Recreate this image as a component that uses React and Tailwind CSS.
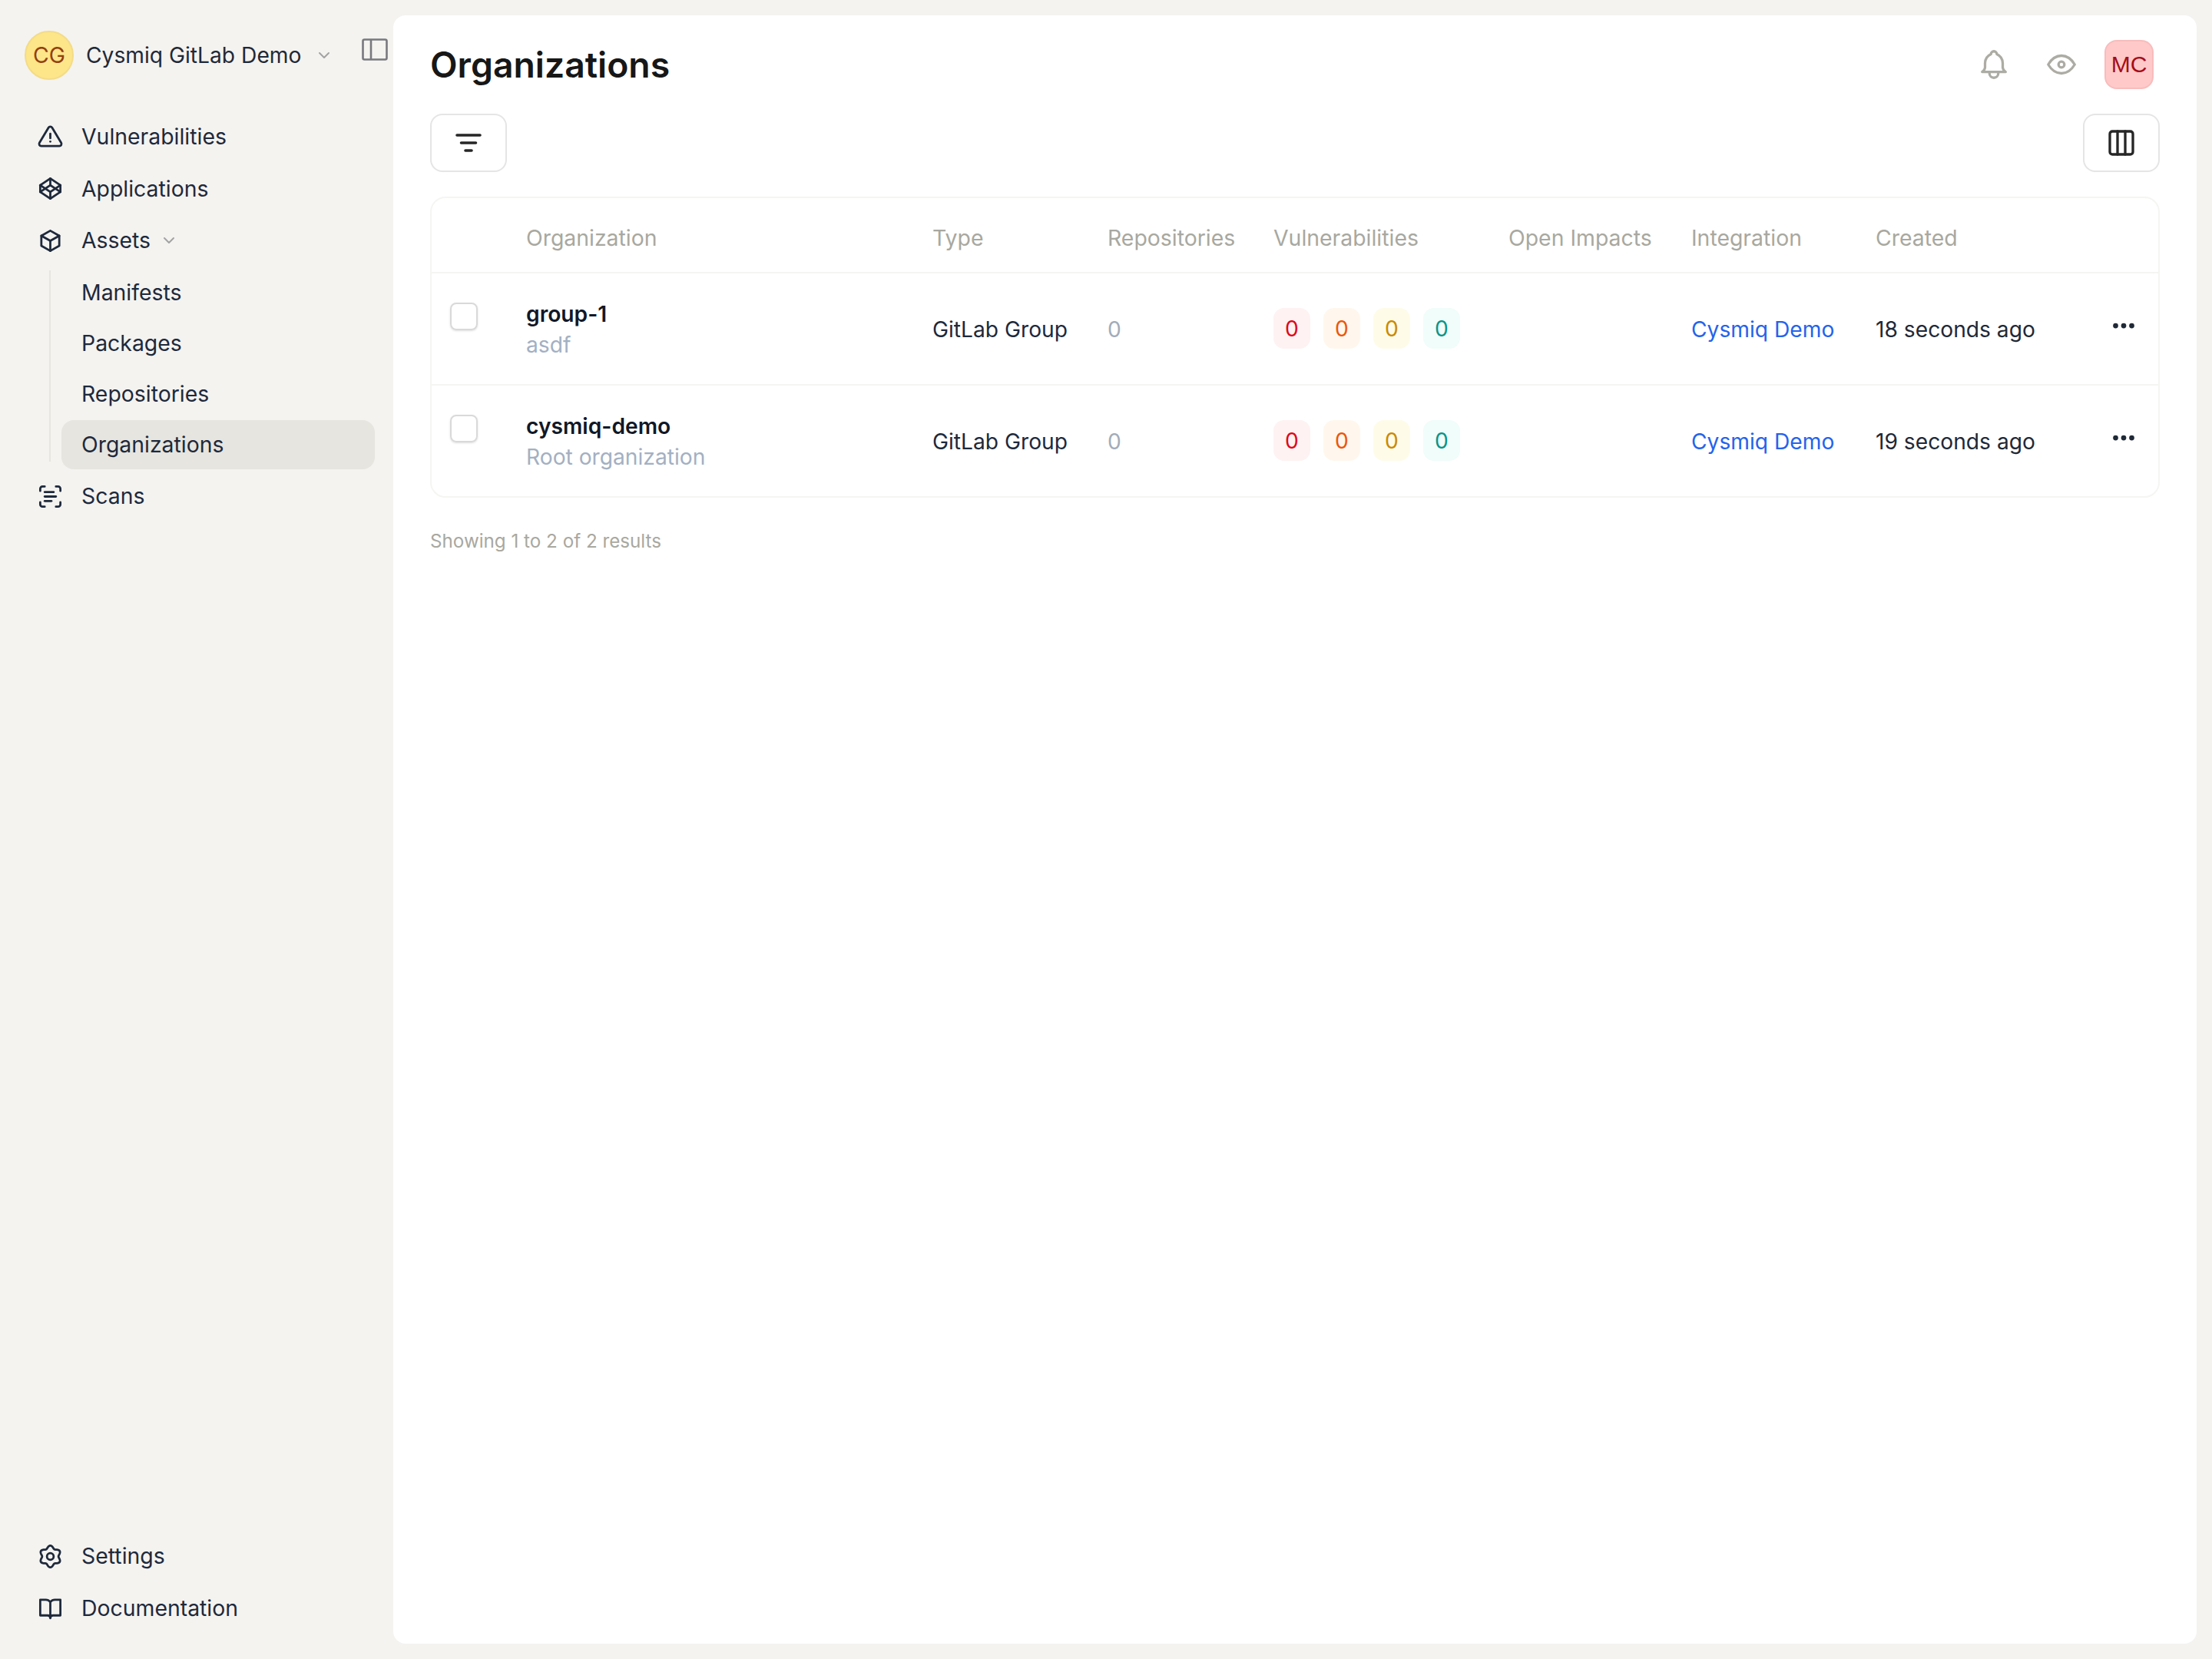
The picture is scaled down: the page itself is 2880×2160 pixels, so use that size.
import {
  TbAlertTriangle, TbBrandCodepen, TbBox, TbChevronDown, TbBell, TbEye, TbDots,
} from 'react-icons/tb';
import { Columns3, ScanText } from 'lucide-react';

// six-lobed cog outline
const cogPath = Array.from({ length: 120 }, (_, i) => {
  const t = (i / 120) * Math.PI * 2;
  const r = 8.5 + 1.2 * Math.cos(6 * t);
  const x = 12 + r * Math.sin(t);
  const y = 12 - r * Math.cos(t);
  return `${i === 0 ? 'M' : 'L'}${x.toFixed(2)} ${y.toFixed(2)}`;
}).join(' ') + ' Z';

function CogIcon({ size }) {
  return (
    <svg width={size} height={size} viewBox="0 0 24 24" fill="none" stroke="currentColor" strokeWidth="1.9" strokeLinejoin="round" className="shrink-0">
      <path d={cogPath} />
      <circle cx="12" cy="12" r="3" />
    </svg>
  );
}

function BookIcon({ size }) {
  return (
    <svg width={size} height={size} viewBox="0 0 24 24" fill="none" stroke="currentColor" strokeWidth="1.9" strokeLinecap="round" strokeLinejoin="round" className="shrink-0">
      <path d="M12 6 C11 4.8 10 4 8 4 H3 V18 H9.5 C11 18 12 19 12 20.5 C12 19 13 18 14.5 18 H21 V4 H16 C14 4 13 4.8 12 6 Z M12 6 V20.5" />
    </svg>
  );
}

function PanelIcon() {
  return (
    <svg width="34" height="30" viewBox="0 0 34 30" fill="none" stroke="currentColor" strokeWidth="2.6" strokeLinejoin="round" className="shrink-0 text-[#78787e]">
      <rect x="1.5" y="1.5" width="31" height="26" rx="2" />
      <path d="M12 1.5 V27.5" />
    </svg>
  );
}

function FilterIcon() {
  return (
    <svg width="36" height="30" viewBox="0 0 36 30" fill="none" stroke="currentColor" strokeWidth="3.6" strokeLinecap="round" className="text-[#262626]">
      <path d="M3 5 H33 M8.5 15 H27.5 M14 25 H22" />
    </svg>
  );
}

const navTop = [
  { label: 'Vulnerabilities', icon: TbAlertTriangle },
  { label: 'Applications', icon: TbBrandCodepen },
];

const subItems = ['Manifests', 'Packages', 'Repositories', 'Organizations'];

const rows = [
  { name: 'group-1', sub: 'asdf', created: '18 seconds ago' },
  { name: 'cysmiq-demo', sub: 'Root organization', created: '19 seconds ago' },
];

const badges = [
  'bg-[#fef2f2] text-[#dc0a1a]',
  'bg-[#fff7ed] text-[#ea580c]',
  'bg-[#fefce8] text-[#ca8a04]',
  'bg-[#f0fdfa] text-[#0d9488]',
];

function NavItem({ label, icon: Icon, children }) {
  return (
    <div className="flex items-center h-[64px] pl-[48px] text-[#1e293b]">
      <Icon size={35} strokeWidth={1.9} className="shrink-0" />
      <span className="ml-[23px] pt-[1px]">{label}</span>
      {children}
    </div>
  );
}

export default function App() {
  return (
    <div className="flex h-screen bg-[#f4f3f0] font-['Inter',sans-serif] text-[28.4px] leading-none">
      {/* sidebar */}
      <aside className="flex flex-col justify-between w-[512px] shrink-0 pb-[34px]">
        <div>
          <div className="flex items-center h-[64px] mt-[40px] pl-[32px]">
            <div className="flex items-center justify-center w-[64px] h-[64px] shrink-0 rounded-full bg-[#fde58a] border-2 border-[#f3dc86] text-[#92400e]">CG</div>
            <span className="ml-[16px] whitespace-nowrap text-[#1f2937] text-[28.2px]">Cysmiq GitLab Demo</span>
            <TbChevronDown size={24} className="ml-[18px] shrink-0 text-[#a3a3a3]" />
            <div className="ml-[37px] -mt-[14px]"><PanelIcon /></div>
          </div>

          <nav className="flex flex-col gap-[3.5px] mt-[42px]">
            {navTop.map((item) => (
              <NavItem key={item.label} {...item} />
            ))}
            <NavItem label="Assets" icon={TbBox}>
              <TbChevronDown size={24} className="ml-[12px] text-[#a3a3a3]" />
            </NavItem>
            <div className="relative flex flex-col gap-[2px] pl-[80px] pr-[24px]">
              <div className="absolute left-[64px] top-[3px] bottom-[10px] w-[2px] bg-[#e6e5df]" />
              {subItems.map((label) => (
                <div
                  key={label}
                  className={`flex items-center h-[64px] pl-[26px] pt-[1px] rounded-[16px] text-[#1e293b] ${label === 'Organizations' ? 'bg-[#e6e5df]' : ''}`}
                >
                  {label}
                </div>
              ))}
            </div>
            <NavItem label="Scans" icon={ScanText} />
          </nav>
        </div>

        <div className="flex flex-col gap-[4px]">
          <NavItem label="Settings" icon={CogIcon} />
          <NavItem label="Documentation" icon={BookIcon} />
        </div>
      </aside>

      {/* main panel */}
      <main className="flex-1 my-[20px] mr-[20px] bg-white rounded-[16px] px-[48px]">
        <header className="flex items-center justify-between h-[128px]">
          <h1 className="text-[46.3px] font-semibold text-[#171717]">Organizations</h1>
          <div className="flex items-center pr-[8px]">
            <TbBell size={46} strokeWidth={1.7} className="text-[#acaca4]" />
            <TbEye size={46} strokeWidth={1.7} className="ml-[42px] text-[#acaca4]" />
            <div className="flex items-center justify-center ml-[33px] w-[64px] h-[64px] rounded-[16px] bg-[#ffc9c9] border-2 border-[#f8bcbc] text-[#a50d1a] font-['Liberation_Sans',sans-serif] text-[30px]">MC</div>
          </div>
        </header>

        <div className="flex items-center justify-between">
          <button className="flex items-center justify-center w-[100px] h-[76px] rounded-[16px] border-2 border-[#e5e5e5]">
            <FilterIcon />
          </button>
          <button className="flex items-center justify-center w-[100px] h-[76px] rounded-[16px] border-2 border-[#e5e5e5] text-[#262626]">
            <Columns3 size={40} strokeWidth={2} />
          </button>
        </div>

        <div className="mt-[32px] border-2 border-[#f5f5f2] rounded-[20px]">
          <table className="w-full table-fixed border-collapse">
            <colgroup>
              <col className="w-[123px]" />
              <col className="w-[529px]" />
              <col className="w-[228px]" />
              <col className="w-[216px]" />
              <col className="w-[306px]" />
              <col className="w-[238px]" />
              <col className="w-[240px]" />
              <col className="w-[305px]" />
              <col />
            </colgroup>
            <thead>
              <tr className="h-[97px] border-b-2 border-[#f5f5f2] text-left text-[#a8a8a0]">
                <th />
                {['Organization', 'Type', 'Repositories', 'Vulnerabilities', 'Open Impacts', 'Integration', 'Created'].map((h) => (
                  <th key={h} className="pt-[8px] font-normal">{h}</th>
                ))}
                <th />
              </tr>
            </thead>
            <tbody>
              {rows.map((row) => (
                <tr key={row.name} className="h-[145.5px] text-[28.2px] border-b-2 border-[#f5f5f2] last:border-b-0">
                  <td className="pl-[24px]">
                    <div className="w-[36px] h-[36px] -mt-[32px] rounded-[8px] border-2 border-[#d9d9d9] shadow-sm" />
                  </td>
                  <td className="pt-[2px]">
                    <div className="font-semibold text-[#111827]">{row.name}</div>
                    <div className="mt-[12px] text-[#a3b0c2]">{row.sub}</div>
                  </td>
                  <td className="pt-[2px] text-[#1e293b]">GitLab Group</td>
                  <td className="pt-[2px] text-[#a3acb9]">0</td>
                  <td>
                    <div className="flex gap-[17px]">
                      {badges.map((tone) => (
                        <span key={tone} className={`flex items-center justify-center w-[48px] h-[53px] rounded-[14px] ${tone}`}>0</span>
                      ))}
                    </div>
                  </td>
                  <td />
                  <td className="pt-[2px] text-[#2563eb]">Cysmiq Demo</td>
                  <td className="pt-[2px] text-[#1f2937]">{row.created}</td>
                  <td>
                    <TbDots size={36} strokeWidth={2.5} className="-mt-[8px] text-[#1f2937]" />
                  </td>
                </tr>
              ))}
            </tbody>
          </table>
        </div>

        <p className="mt-[45px] text-[24.2px] text-[#a8a8a0]">Showing 1 to 2 of 2 results</p>
      </main>
    </div>
  );
}
